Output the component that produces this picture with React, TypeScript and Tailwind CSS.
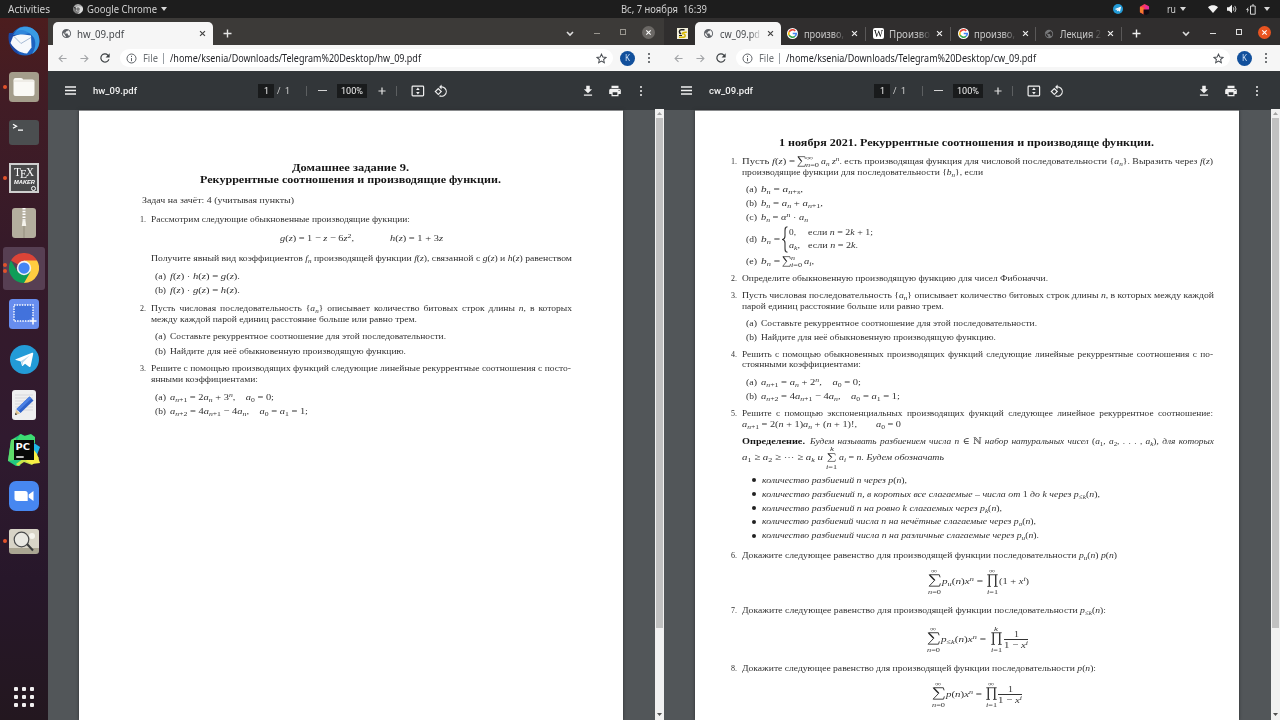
import { useLayoutEffect, useRef, type ReactNode } from 'react';

/* Stretches a single line of text to the width of its box. */
function Fit({ className = '', children }: { className?: string; children: ReactNode }) {
  const box = useRef<HTMLDivElement>(null);
  const line = useRef<HTMLSpanElement>(null);
  useLayoutEffect(() => {
    const b = box.current;
    const l = line.current;
    if (!b || !l) return;
    l.style.transform = 'none';
    const natural = l.getBoundingClientRect().width;
    const target = b.getBoundingClientRect().width;
    if (natural > 0) l.style.transform = `scaleX(${target / natural})`;
  });
  return (
    <div ref={box} className={`shrink-0 ${className}`}>
      <span ref={line} className="inline-block origin-left whitespace-nowrap">
        {children}
      </span>
    </div>
  );
}

/* Tiny math markup: $...$ is math, _{..} and ^{..} are scripts. */
function math(src: string, key: string): ReactNode[] {
  const out: ReactNode[] = [];
  const parts = src.match(/_\{[^}]*\}|\^\{[^}]*\}|[a-zA-Zα]+|[^a-zA-Zα_^]+/g) || [];
  parts.forEach((p, i) => {
    const k = key + i;
    if (p.startsWith('_{'))
      out.push(
        <span key={k} className="align-[-1.5px] text-[6.8px] leading-[0]">
          {math(p.slice(2, -1), k + 's')}
        </span>,
      );
    else if (p.startsWith('^{'))
      out.push(
        <span key={k} className="align-[3.5px] text-[6.8px] leading-[0]">
          {math(p.slice(2, -1), k + 's')}
        </span>,
      );
    else if (/^[a-zA-Zα]/.test(p)) out.push(<i key={k}>{p}</i>);
    else out.push(<span key={k} className="not-italic">{p}</span>);
  });
  return out;
}

function T({ s }: { s: string }) {
  return <>{s.split('$').map((p, i) => (i % 2 ? <span key={i}>{math(p, 'm' + i)}</span> : <span key={i}>{p}</span>))}</>;
}

function Row({ className = '', children }: { className?: string; children: ReactNode }) {
  return <div className={`flex h-[11px] leading-[11px] ${className}`}>{children}</div>;
}

function Item({ at, n, w, s }: { at: string; n: string; w: string; s: string }) {
  return (
    <Row className={at}>
      <Fit className="w-[6px]">{n}</Fit>
      <Fit className={`ml-[5px] ${w}`}><T s={s} /></Fit>
    </Row>
  );
}

function Sub({ at, n, w, s }: { at: string; n: string; w: string; s: string }) {
  return (
    <Row className={at}>
      <Fit className="w-[11px]">{n}</Fit>
      <Fit className={`ml-[4px] ${w}`}><T s={s} /></Fit>
    </Row>
  );
}

function Bullet({ at, w, s }: { at: string; w: string; s: string }) {
  return (
    <Row className={`items-center italic ${at}`}>
      <span className="size-[4px] shrink-0 rounded-full bg-[#222]" />
      <Fit className={`ml-[6px] ${w}`}><T s={s} /></Fit>
    </Row>
  );
}

function SumSign({ className }: { className: string }) {
  return (
    <svg viewBox="0 0 14 14" className={className} preserveAspectRatio="none" fill="none" stroke="#333">
      <path d="M13 3.6 12.2.8H1.4L7.2 6.8 1.2 13.1h11.2l.9-3" strokeWidth="1" />
      <path d="m1.8 1 5.4 5.8" strokeWidth="1.6" />
    </svg>
  );
}

function ProdSign({ className }: { className: string }) {
  return (
    <svg viewBox="0 0 12 14" className={className} preserveAspectRatio="none" fill="none" stroke="#333">
      <path d="M.3.8h11.4M.3 13.4h4M7.7 13.4h4" strokeWidth=".9" />
      <path d="M2.5.8v12.4M9.5.8v12.4" strokeWidth="1.5" />
    </svg>
  );
}

function Big({ kind, top, bottom }: { kind: 'sum' | 'prod'; top: string; bottom: string }) {
  return (
    <div className="flex w-[14px] shrink-0 flex-col items-center text-[6.5px] leading-[7px]">
      <Fit className={`h-[7px] ${top === '∞' ? 'w-[6px]' : 'w-[4px]'}`}>{math(top, 't')}</Fit>
      {kind === 'sum' ? <SumSign className="h-[13px] w-[13px]" /> : <ProdSign className="h-[13px] w-[11px]" />}
      <Fit className={`mt-px h-[7px] ${kind === 'sum' ? 'w-[13px]' : 'w-[11px]'}`}>{math(bottom, 'b')}</Fit>
    </div>
  );
}

function Fraction() {
  return (
    <div className="flex w-[24px] shrink-0 flex-col items-center">
      <Fit className="h-[10px] w-[5px] leading-[10px]">1</Fit>
      <span className="h-px w-full bg-[#333]" />
      <Fit className="h-[10px] w-[24px] leading-[11px]"><T s="$1 − x^{i}$" /></Fit>
    </div>
  );
}

function LeftDoc() {
  return (
    <>
      <Row className="pl-[213px] text-[10.5px] font-bold text-[#151515]">
        <Fit className="w-[117px]">Домашнее задание 9.</Fit>
      </Row>
      <Row className="mt-px pl-[121px] text-[10.5px] font-bold text-[#151515]">
        <Fit className="w-[301px]">Рекуррентные соотношения и производящие функции.</Fit>
      </Row>
      <Row className="mt-[9.5px] pl-[63px]">
        <Fit className="w-[152px]">Задач на зачёт: 4 (учитывая пункты)</Fit>
      </Row>
      <Item at="mt-[8px] pl-[61px]" n="1." w="w-[259px]" s="Рассмотрим следующие обыкновенные производящие фукнции:" />
      <Row className="mt-[8.5px] pl-[201px]">
        <Fit className="w-[74px]"><T s="$g(z) = 1 − z − 6z^{2},$" /></Fit>
        <Fit className="ml-[36px] w-[53px]"><T s="$h(z) = 1 + 3z$" /></Fit>
      </Row>
      <Row className="mt-[8.5px] pl-[72px]">
        <Fit className="w-[421px]"><T s="Получите явный вид коэффициентов $f_{n}$ производящей функции $f(z)$, связанной с $g(z)$ и $h(z)$ равенством" /></Fit>
      </Row>
      <Sub at="mt-[7px] pl-[76px]" n="(a)" w="w-[70px]" s="$f(z) · h(z) = g(z).$" />
      <Sub at="mt-[3px] pl-[76px]" n="(b)" w="w-[70px]" s="$f(z) · g(z) = h(z).$" />
      <Item at="mt-[7px] pl-[61px] [word-spacing:1.5px]" n="2." w="w-[421px]" s="Пусть числовая последовательность ${a_{n}}$ описывает количество битовых строк длины $n$, в которых" />
      <Row className="pl-[72px]"><Fit className="w-[266px]">между каждой парой единиц расстояние больше или равно трем.</Fit></Row>
      <Sub at="mt-[6px] pl-[76px]" n="(a)" w="w-[276px]" s="Составьте рекуррентное соотношение для этой последовательности." />
      <Sub at="mt-[4px] pl-[76px]" n="(b)" w="w-[236px]" s="Найдите для неё обыкновенную производящую функцию." />
      <Item at="mt-[6px] pl-[61px]" n="3." w="w-[420px]" s="Решите с помощью производящих функций следующие линейные рекуррентные соотношения с посто-" />
      <Row className="pl-[72px]"><Fit className="w-[107px]">янными коэффициентами:</Fit></Row>
      <Sub at="mt-[7px] pl-[76px]" n="(a)" w="w-[104px]" s={'$a_{n+1} = 2a_{n} + 3^{n},\u2003a_{0} = 0;$'} />
      <Sub at="mt-[3px] pl-[76px]" n="(b)" w="w-[138px]" s={'$a_{n+2} = 4a_{n+1} − 4a_{n},\u2003a_{0} = a_{1} = 1;$'} />
    </>
  );
}

function RightDoc() {
  return (
    <>
      <Row className="pl-[84px] text-[10.5px] font-bold text-[#151515]">
        <Fit className="w-[375px]">1 ноября 2021. Рекуррентные соотношения и производяще функции.</Fit>
      </Row>
      <Row className="mt-[8.5px] pl-[36px]">
        <Fit className="w-[6px]">1.</Fit>
        <Fit className="ml-[5px] w-[53px]"><T s="Пусть $f(z) =$" /></Fit>
        <SumSign className="ml-[2px] h-[11px] w-[9px] shrink-0" />
        <div className="-mt-[2px] flex w-[14px] shrink-0 flex-col text-[6.5px] leading-[7px]">
          <Fit className="w-[7px]">∞</Fit>
          <Fit className="w-[13px]"><T s="$n=0$" /></Fit>
        </div>
        <Fit className="ml-px w-[392px]"><T s="$a_{n} z^{n}$. есть производящая функция для числовой последовательности ${a_{n}}$. Выразить через $f(z)$" /></Fit>
      </Row>
      <Row className="-mt-[0.5px] pl-[47px]">
        <Fit className="w-[241px]"><T s="производящие функции для последовательности ${b_{n}}$, если" /></Fit>
      </Row>
      <Sub at="mt-[6.5px] pl-[51px]" n="(a)" w="w-[42px]" s="$b_{n} = a_{n+s},$" />
      <Sub at="mt-[2.5px] pl-[51px]" n="(b)" w="w-[62px]" s="$b_{n} = a_{n} + a_{n+1},$" />
      <Sub at="mt-[3px] pl-[51px]" n="(c)" w="w-[47px]" s="$b_{n} = α^{n} · a_{n}$" />
      <div className="mt-[3px] flex h-[27px] items-center pl-[51px] leading-[11px]">
        <Fit className="w-[11px]">(d)</Fit>
        <Fit className="ml-[4px] w-[19px]"><T s="$b_{n} =$" /></Fit>
        <svg viewBox="0 0 6 27" className="ml-[2px] h-[27px] w-[6px] shrink-0" fill="none" stroke="#333" strokeWidth="1.1">
          <path d="M5.5.7C3 1 3 2.5 3 5v5c0 2-.6 3-2.4 3.500C2.400 14 3 15 3 17v5c0 2.500 0 4 2.500 4.300" />
        </svg>
        <div className="flex flex-col gap-[2.5px]">
          <div className="flex">
            <Fit className="ml-px w-[7px]">0,</Fit>
            <Fit className="ml-[12px] w-[65px]"><T s="если $n = 2k + 1;$" /></Fit>
          </div>
          <div className="flex">
            <Fit className="ml-px w-[11px]"><T s="$a_{k},$" /></Fit>
            <Fit className="ml-[8px] w-[50px]"><T s="если $n = 2k.$" /></Fit>
          </div>
        </div>
      </div>
      <Row className="mt-[3px] pl-[51px]">
        <Fit className="w-[11px]">(e)</Fit>
        <Fit className="ml-[4px] w-[19px]"><T s="$b_{n} =$" /></Fit>
        <SumSign className="ml-[2px] h-[11px] w-[9px] shrink-0" />
        <div className="-mt-[2px] flex w-[12px] shrink-0 flex-col text-[6.5px] leading-[7px]">
          <Fit className="w-[4px] italic">n</Fit>
          <Fit className="w-[11px]"><T s="$i=0$" /></Fit>
        </div>
        <Fit className="ml-px w-[10px]"><T s="$a_{i},$" /></Fit>
      </Row>
      <Item at="mt-[6px] pl-[36px]" n="2." w="w-[306px]" s="Определите обыкновенную производящую функцию для чисел Фибоначчи." />
      <Item at="mt-[6.5px] pl-[36px]" n="3." w="w-[472px]" s="Пусть числовая последовательность ${a_{n}}$ описывает количество битовых строк длины $n$, в которых между каждой" />
      <Row className="-mt-[0.5px] pl-[47px]"><Fit className="w-[202px]">парой единиц расстояние больше или равно трем.</Fit></Row>
      <Sub at="mt-[6.5px] pl-[51px]" n="(a)" w="w-[276px]" s="Составьте рекуррентное соотношение для этой последовательности." />
      <Sub at="mt-[2.5px] pl-[51px]" n="(b)" w="w-[235px]" s="Найдите для неё обыкновенную производящую функцию." />
      <Item at="mt-[6px] pl-[36px] [word-spacing:1px]" n="4." w="w-[471px]" s="Решить с помощью обыкновенных производящих функций следующие линейные рекуррентные соотношения с по-" />
      <Row className="-mt-[0.5px] pl-[47px]"><Fit className="w-[119px]">стоянными коэффициентами:</Fit></Row>
      <Sub at="mt-[6.5px] pl-[51px]" n="(a)" w="w-[100px]" s={'$a_{n+1} = a_{n} + 2^{n},\u2003a_{0} = 0;$'} />
      <Sub at="mt-[3px] pl-[51px]" n="(b)" w="w-[139px]" s={'$a_{n+2} = 4a_{n+1} − 4a_{n},\u2003a_{0} = a_{1} = 1;$'} />
      <Item at="mt-[6px] pl-[36px] [word-spacing:2px]" n="5." w="w-[471px]" s="Решите с помощью экспоненциальных производящих функций следующее линейное рекуррентное соотношение:" />
      <Row className="pl-[47px]">
        <Fit className="w-[115px]"><T s="$a_{n+1} = 2(n + 1)a_{n} + (n + 1)!,$" /></Fit>
        <Fit className="ml-[19px] w-[25px]"><T s="$a_{0} = 0$" /></Fit>
      </Row>
      <Row className="mt-[6px] pl-[47px] [word-spacing:1px]">
        <Fit className="w-[63px] font-bold text-[#151515]">Определение.</Fit>
        <Fit className="ml-[5px] w-[404px] italic"><T s="Будем называть разбиением числа $n ∈ ℕ$ набор натуральных чисел $(a_{1}, a_{2}, . . . , a_{k})$, для которых" /></Fit>
      </Row>
      <Row className="mt-[5.5px] items-center pl-[47px]">
        <Fit className="w-[81px] italic"><T s="$a_{1} ≥ a_{2} ≥ ··· ≥ a_{k}$  и" /></Fit>
        <div className="ml-[2px] flex w-[13px] shrink-0 flex-col items-center text-[6.5px] leading-[7px]">
          <Fit className="w-[4px] italic">k</Fit>
          <SumSign className="mt-px h-[9px] w-[9px]" />
          <Fit className="mt-px w-[11px]"><T s="$i=1$" /></Fit>
        </div>
        <Fit className="ml-px w-[105px] italic"><T s="$a_{i} = n$. Будем обозначать" /></Fit>
      </Row>
      <Bullet at="mt-[11.5px] pl-[57px]" w="w-[145px]" s="количество разбиений $n$ через $p(n),$" />
      <Bullet at="mt-[3px] pl-[57px]" w="w-[338px]" s="количество разбиений $n$, в коротых все слагаемые – числа от $1$ до $k$ через $p_{≤k}(n),$" />
      <Bullet at="mt-[3px] pl-[57px]" w="w-[240px]" s="количество разбиений $n$ на ровно $k$ слагаемых через $p_{k}(n),$" />
      <Bullet at="mt-[2.5px] pl-[57px]" w="w-[274px]" s="количество разбиений числа $n$ на нечётные слагаемые через $p_{o}(n),$" />
      <Bullet at="mt-[3px] pl-[57px]" w="w-[277px]" s="количество разбиений числа $n$ на различные слагаемые через $p_{u}(n).$" />
      <Item at="mt-[8.5px] pl-[36px]" n="6." w="w-[375px]" s="Докажите следующее равенство для производящей функции последовательности $p_{u}(n) p(n)$" />
      <div className="mt-[5.5px] flex h-[30px] items-center pl-[232px] leading-[11px]">
        <Big kind="sum" top="∞" bottom="n=0" />
        <Fit className="ml-px w-[41px]"><T s="$p_{u}(n)x^{n} =$" /></Fit>
        <div className="w-[2px]" />
        <Big kind="prod" top="∞" bottom="i=1" />
        <Fit className="w-[30px]"><T s="$(1 + x^{i})$" /></Fit>
      </div>
      <Item at="mt-[9px] pl-[36px]" n="7." w="w-[364px]" s="Докажите следующее равенство для производящей функции последовательности $p_{≤k}(n)$:" />
      <div className="mt-[8px] flex h-[30px] items-center pl-[231px] leading-[11px]">
        <Big kind="sum" top="∞" bottom="n=0" />
        <Fit className="ml-px w-[45px]"><T s="$p_{≤k}(n)x^{n} =$" /></Fit>
        <div className="w-[3px]" />
        <Big kind="prod" top="k" bottom="i=1" />
        <div className="w-px" />
        <Fraction />
      </div>
      <Item at="mt-[8.5px] pl-[36px]" n="8." w="w-[354px]" s="Докажите следующее равенство для производящей функции последовательности $p(n)$:" />
      <div className="mt-[5.5px] flex h-[30px] items-center pl-[236px] leading-[11px]">
        <Big kind="sum" top="∞" bottom="n=0" />
        <Fit className="ml-px w-[36px]"><T s="$p(n)x^{n} =$" /></Fit>
        <div className="w-[2px]" />
        <Big kind="prod" top="∞" bottom="i=1" />
        <Fraction />
      </div>
      <Item at="mt-[9px] pl-[36px]" n="9." w="w-[354px]" s="Докажите следующее равенство для производящей функции последовательности $p(n)$:" />
    </>
  );
}

function Globe({ className }: { className: string }) {
  return (
    <svg viewBox="0 0 24 24" className={className} fill="currentColor">
      <path d="M12 2a10 10 0 1 0 0 20 10 10 0 0 0 0-20Zm-1 17.900A8 8 0 0 1 4.200 10.200L9 15v1a2 2 0 0 0 2 2v1.900Zm6.900-2.500A2 2 0 0 0 16 16h-1v-3a1 1 0 0 0-1-1H8v-2h2a1 1 0 0 0 1-1V7h2a2 2 0 0 0 2-2v-.400a8 8 0 0 1 2.900 12.800Z" />
    </svg>
  );
}

function Close({ className }: { className: string }) {
  return (
    <svg viewBox="0 0 10 10" className={`size-[7px] shrink-0 ${className}`} fill="none" stroke="currentColor" strokeWidth="1.7">
      <path d="m1.500 1.500 7 7m0-7-7 7" />
    </svg>
  );
}

function Plus({ className }: { className: string }) {
  return (
    <svg viewBox="0 0 9 9" className={`size-[9px] shrink-0 ${className}`} fill="none" stroke="currentColor" strokeWidth="1.4">
      <path d="M4.500.5v8M.5 4.500h8" />
    </svg>
  );
}

function GoogleIcon() {
  return (
    <svg viewBox="0 0 48 48" className="size-[11px] shrink-0">
      <circle cx="24" cy="24" r="24" fill="#fff" />
      <g fill="none" strokeWidth="7">
        <path d="M36 13A16.500 16.500 0 0 0 9.500 16.500" stroke="#ea4335" />
        <path d="M9.500 16.500a16.500 16.500 0 0 0 0 15" stroke="#fbbc05" />
        <path d="M9.500 31.500A16.500 16.500 0 0 0 35 36" stroke="#34a853" />
        <path d="M35 36a16 16 0 0 0 5.500-12H25" stroke="#4285f4" />
      </g>
    </svg>
  );
}

function Controls({ active }: { active: boolean }) {
  return (
    <div className="ml-auto flex items-center pr-[9px]">
      <svg viewBox="0 0 8 6" className="mt-[4px] h-[6px] w-[8px]" fill="none" stroke="#ddd" strokeWidth="1.6"><path d="m1 1 3 3 3-3" /></svg>
      <span className={`ml-[20px] mt-[3px] h-px w-[6px] ${active ? 'bg-[#ddd]' : 'bg-[#99968f]'}`} />
      <span className={`ml-[20px] mt-px size-[6px] border ${active ? 'border-[#ddd]' : 'border-[#99968f]'}`} />
      <span className={`ml-[16px] mt-px flex size-[13px] items-center justify-center rounded-full text-white ${active ? 'bg-[#e95420]' : 'bg-[#6b6865]'}`}>
        <Close className="scale-90" />
      </span>
    </div>
  );
}

/* Tab caption that runs out under a fade at its right edge. */
function Caption({ className, w, children }: { className: string; w: string; children: string }) {
  return (
    <div className={`shrink-0 [mask-image:linear-gradient(to_right,black_70%,transparent)] ${className}`}>
      <Fit className={w}>{children}</Fit>
    </div>
  );
}

function Tabs({ right }: { right: boolean }) {
  if (!right)
    return (
      <div className="flex h-[27px] bg-[#3c3a38]">
        <div className="ml-[5px] mt-[4px] flex h-[23px] w-[160px] items-center rounded-t-[5px] bg-[#f6f6f6]">
          <Globe className="ml-[8px] size-[11px] text-[#5f6368]" />
          <Fit className="ml-[5px] w-[47px] text-[10.5px] leading-[14px] text-[#45484c]">hw_09.pdf</Fit>
          <Close className="ml-auto mr-[7px] text-[#444]" />
        </div>
        <Plus className="ml-[10px] mt-[11px] text-[#e5e5e5]" />
        <Controls active={false} />
      </div>
    );
  return (
    <div className="flex h-[27px] bg-[#302e2e]">
      <div className="ml-[13px] mt-[10px] flex size-[11px] items-center justify-center bg-[#f3f0dc]">
        <svg viewBox="0 0 11 11" className="size-[11px]" fill="none" strokeWidth="1.5">
          <path d="M7.500 1.800H4.200C1.800 2 1.800 5.500 4.200 5.700" stroke="#222" />
          <path d="M9.800 4.200C6 4 4 5.200 6.500 6.300" stroke="#d8b900" />
          <path d="M2 9.300h4.500C8.800 9 8.600 7 7 6" stroke="#d8b900" />
          <path d="M2 7.500h3" stroke="#222" strokeWidth="1" />
        </svg>
      </div>
      <div className="ml-[7px] mt-[4px] flex h-[23px] w-[86px] items-center rounded-t-[5px] bg-[#f6f6f6]">
        <Globe className="ml-[8px] size-[11px] shrink-0 text-[#5f6368]" />
        <Caption className="ml-[6px] w-[42px] text-[10.5px] leading-[14px] text-[#45484c]" w="w-[40px]">cw_09.pd</Caption>
        <Close className="ml-[5px] text-[#444]" />
      </div>
      <div className="flex h-[31px] items-center text-[10.5px] leading-[14px] text-[#c9c9c9]">
        <div className="ml-[6px] flex items-center">
          <GoogleIcon />
          <Caption className="ml-[6px] w-[42px]" w="w-[40px]">произво,</Caption>
          <Close className="ml-[5px] text-[#eee]" />
        </div>
        <span className="ml-[7px] h-[14px] w-px bg-[#5a5858]" />
        <div className="ml-[7px] flex items-center">
          <span className="flex size-[11px] shrink-0 items-center justify-center rounded-[2px] bg-white font-['Liberation_Serif',serif] text-[10px] leading-none text-black">
            <Fit className="w-[9px]">W</Fit>
          </span>
          <Caption className="ml-[5px] w-[42px]" w="w-[41px]">Произво</Caption>
          <Close className="ml-[5px] text-[#eee]" />
        </div>
        <span className="ml-[7px] h-[14px] w-px bg-[#5a5858]" />
        <div className="ml-[7px] flex items-center">
          <GoogleIcon />
          <Caption className="ml-[5px] w-[43px]" w="w-[41px]">произво,</Caption>
          <Close className="ml-[5px] text-[#eee]" />
        </div>
        <span className="ml-[6px] h-[14px] w-px bg-[#5a5858]" />
        <div className="ml-[8px] flex items-center">
          <Globe className="size-[10px] shrink-0 text-[#77787a]" />
          <Caption className="ml-[6px] w-[42px]" w="w-[41px]">Лекция 2</Caption>
          <Close className="ml-[5px] text-[#eee]" />
        </div>
        <span className="ml-[7px] h-[14px] w-px bg-[#5a5858]" />
        <Plus className="ml-[10px] text-[#eee]" />
      </div>
      <Controls active />
    </div>
  );
}

function Dots({ className }: { className: string }) {
  return (
    <span className={`flex flex-col gap-[2px] ${className}`}>
      <span className="size-[2px] rounded-full bg-current" />
      <span className="size-[2px] rounded-full bg-current" />
      <span className="size-[2px] rounded-full bg-current" />
    </span>
  );
}

function AddressBar({ right, url }: { right: boolean; url: string }) {
  return (
    <div className="flex h-[26px] items-center bg-[#f6f6f6] text-[10.5px] leading-[14px]">
      <svg viewBox="0 0 10 9" className="ml-[10px] h-[9px] w-[9px] shrink-0" fill="none" stroke="#a3a5a8" strokeWidth="1.2"><path d="M9.500 4.500H1M5 .7 1.200 4.500 5 8.300" /></svg>
      <svg viewBox="0 0 10 9" className="ml-[13px] h-[9px] w-[9px] shrink-0" fill="none" stroke="#a3a5a8" strokeWidth="1.2"><path d="M.5 4.500H9M5 .7l3.800 3.800L5 8.300" /></svg>
      <svg viewBox="0 0 24 24" className="ml-[9px] size-[14px] shrink-0" fill="#3c4043"><path d="M17.650 6.350A8 8 0 1 0 19.730 14h-2.080A6 6 0 1 1 12 6c1.660 0 3.140.690 4.220 1.780L13 11h7V4l-2.350 2.350z" /></svg>
      <div className={`ml-[8px] flex h-[18px] items-center rounded-full bg-white ${right ? 'w-[494px]' : 'w-[493px]'}`}>
        <svg viewBox="0 0 11 11" className="ml-[6px] size-[11px] shrink-0" fill="none" stroke="#5f6368" strokeWidth="1"><circle cx="5.500" cy="5.500" r="4.500" /><path d="M5.500 5v3.200M5.500 2.800v1.200" /></svg>
        <Fit className="ml-[6px] w-[15px] text-[#6d7175]">File</Fit>
        <span className="ml-[5px] h-[11px] w-px bg-[#9aa0a6]" />
        <Fit className={`ml-[6px] text-[#232428] ${right ? 'w-[250px]' : 'w-[251px]'}`}>{url}</Fit>
        <svg viewBox="0 0 24 24" className="ml-auto mr-[6px] size-[11px]" fill="none" stroke="#4b4f54" strokeWidth="2.2"><path d="m12 2.500 2.900 6.400 7 .7-5.300 4.600 1.600 6.900L12 17.500l-6.200 3.600 1.600-6.900L2.100 9.600l7-.7z" /></svg>
      </div>
      <span className="ml-[7px] flex size-[15px] items-center justify-center rounded-full bg-[#12509c] text-[8px] leading-none text-[#cfe0f5]">
        <Fit className="w-[5px]">K</Fit>
      </span>
      <Dots className="ml-[13px] text-[#45484c]" />
    </div>
  );
}

function PdfBar({ name }: { name: string }) {
  return (
    <div className="flex h-[39px] items-center bg-[#323639] font-['Roboto',sans-serif] text-[9.5px] leading-[12px] text-[#f1f1f1]">
      <svg viewBox="0 0 11 9" className="ml-[17px] h-[9px] w-[11px] shrink-0" stroke="#f1f1f1" strokeWidth="1.5"><path d="M0 1h11M0 4.500h11M0 8h11" /></svg>
      <Fit className="ml-[17px] w-[44px] font-medium">{name}</Fit>
      <div className="ml-[121px] flex h-[14px] w-[16px] items-center justify-center bg-[#191b1c]"><Fit className="w-[5px]">1</Fit></div>
      <Fit className="ml-[3px] w-[13px] text-[#d5d5d5]">/&nbsp; 1</Fit>
      <span className="ml-[16px] h-[10px] w-px bg-[#5c5f61]" />
      <span className="ml-[11px] h-px w-[9px] bg-[#d5d5d5]" />
      <div className="ml-[10px] flex h-[14px] w-[30px] items-center justify-center bg-[#191b1c]"><Fit className="w-[22px]">100%</Fit></div>
      <Plus className="ml-[11px] !size-[8px] text-[#dedede]" />
      <span className="ml-[10px] h-[10px] w-px bg-[#5c5f61]" />
      <svg viewBox="0 0 14 12" className="ml-[14px] h-[12px] w-[14px] shrink-0" fill="none" stroke="#f1f1f1" strokeWidth="1.2">
        <rect x="1.100" y="1.100" width="11.500" height="9.800" rx=".8" />
        <path d="M6.900 2.500 5.100 4.900h3.600zM6.900 9.500 5.100 7.100h3.600z" fill="#f1f1f1" stroke="none" />
      </svg>
      <svg viewBox="0 0 24 24" className="ml-[9px] size-[14px] shrink-0" fill="#f1f1f1">
        <path d="M7.340 6.410.860 12.900l6.490 6.480 6.490-6.480-6.500-6.490zM3.690 12.900l3.660-3.660L11 12.900l-3.660 3.660-3.650-3.660zm15.670-6.260A8.950 8.950 0 0 0 13 4V.760L8.760 5 13 9.240V6c1.790 0 3.580.680 4.950 2.050a7.007 7.007 0 0 1 0 9.900 6.973 6.973 0 0 1-7.790 1.440l-1.490 1.490C10.020 21.620 11.510 22 13 22c2.300 0 4.610-.880 6.360-2.640a8.980 8.980 0 0 0 0-12.720z" />
      </svg>
      <svg viewBox="0 0 24 24" className="ml-[133px] size-[14px] shrink-0" fill="#f1f1f1"><path d="M19 9h-4V3H9v6H5l7 7zM5 18v2h14v-2z" /></svg>
      <svg viewBox="0 0 24 24" className="ml-[13px] size-[14px] shrink-0" fill="#f1f1f1"><path d="M19 8H5c-1.660 0-3 1.340-3 3v6h4v4h12v-4h4v-6c0-1.660-1.340-3-3-3zm-3 11H8v-5h8v5zm3-7a1 1 0 1 1 0-2 1 1 0 0 1 0 2zm-1-9H6v4h12z" /></svg>
      <Dots className="ml-[18px]" />
    </div>
  );
}

function Window({ right }: { right: boolean }) {
  return (
    <div className="flex h-full w-[616px] shrink-0 flex-col bg-[#525659] font-['Noto_Sans',sans-serif]">
      <Tabs right={right} />
      <AddressBar right={right} url={right ? '/home/ksenia/Downloads/Telegram%20Desktop/cw_09.pdf' : '/home/ksenia/Downloads/Telegram%20Desktop/hw_09.pdf'} />
      <PdfBar name={right ? 'cw_09.pdf' : 'hw_09.pdf'} />
      <div className="flex min-h-0 flex-1 justify-between pl-[31px]">
        <div className={`h-full w-[544px] overflow-hidden border-t border-[#8a8c8e] bg-white font-['Liberation_Serif','DejaVu_Serif',serif] text-[9.2px] text-[#303030] shadow-[0_0_3px_#2d2f31] ${right ? 'pt-[25.5px]' : 'pt-[51px]'}`}>
          {right ? <RightDoc /> : <LeftDoc />}
        </div>
        <div className="-mt-px flex w-[9px] flex-col items-center bg-[#f1f1f1]">
          <svg viewBox="0 0 9 9" className="size-[9px] shrink-0" fill="#a3a3a3"><path d="m2 6 2.500-3L7 6z" /></svg>
          <span className="h-[510px] w-[7px] shrink-0 bg-[#c1c1c1]" />
          <svg viewBox="0 0 9 9" className="mb-px mt-auto size-[9px] shrink-0" fill="#505050"><path d="m2 3 2.500 3L7 3z" /></svg>
        </div>
      </div>
    </div>
  );
}

function ChromeLogo({ className, grey = false }: { className: string; grey?: boolean }) {
  return (
    <svg viewBox="0 0 48 48" className={className}>
      <path d="M24 24 3.200 12A24 24 0 0 1 44.800 12z" fill={grey ? '#a7a7a7' : '#db4437'} />
      <path d="M24 24V12h20.800A24 24 0 0 1 24 48z" fill={grey ? '#dcdcdc' : '#ffcd40'} />
      <path d="M3.200 12A24 24 0 0 0 24 48l10.400-18L24 24l-10.400 6z" fill={grey ? '#7c7c7c' : '#0f9d58'} />
      <circle cx="24" cy="24" r="11.500" fill={grey ? '#e5e5e5' : '#f4f4f4'} />
      <circle cx="24" cy="24" r="9" fill={grey ? '#777' : '#4285f4'} />
    </svg>
  );
}

function TelegramLogo({ className }: { className: string }) {
  return (
    <svg viewBox="0 0 28 28" className={className}>
      <circle cx="14" cy="14" r="14" fill="#239bd7" />
      <path d="M5.500 13.800 21.300 7.600c.8-.3 1.300.2 1.100 1.100l-2.500 11.700c-.2.8-.8 1-1.500.6l-3.900-2.900-2 1.900c-.6.500-1 .2-1.100-.4l-1-3.700-4.700-1.300c-.8-.3-.8-.6-.2-.8z" fill="#fff" />
      <path d="m10.500 15.800 8.500-5.600-6.500 6.700-.4 3z" fill="#b9d9ec" />
    </svg>
  );
}

function Caret({ className }: { className: string }) {
  return <svg viewBox="0 0 6 4" className={`h-[4px] w-[6px] shrink-0 ${className}`} fill="#d8d8d8"><path d="M0 0h6L3 4z" /></svg>;
}

function TopBar() {
  return (
    <div className="flex h-[18px] shrink-0 items-center bg-[#1d1d1d] font-['Noto_Sans',sans-serif] text-[10px] leading-[18px] text-[#d0d0d0]">
      <Fit className="ml-[8px] w-[42px]">Activities</Fit>
      <ChromeLogo grey className="ml-[23px] size-[10px]" />
      <Fit className="ml-[4px] w-[70px]">Google Chrome</Fit>
      <Caret className="ml-[4px]" />
      <Fit className="ml-[454px] w-[86px]">Вс, 7 ноября&nbsp; 16:39</Fit>
      <TelegramLogo className="ml-[406px] size-[10px]" />
      <svg viewBox="0 0 12 12" className="ml-[16px] size-[11px]">
        <path d="m1 3 5-3 5 2.500-4 6-2 3-4-2.500z" fill="#fa3a5c" />
        <path d="m1 3 4 1v7L1 9z" fill="#f57b2c" />
        <path d="m6 1 5 2v3L8 8z" fill="#e62ba0" />
        <path d="M5 6h6v4l-3 2-3-1z" fill="#120a14" />
      </svg>
      <Fit className="ml-[17px] w-[9px]">ru</Fit>
      <Caret className="ml-[4px]" />
      <svg viewBox="0 0 10 8" className="ml-[22px] h-[8px] w-[10px]" fill="#f0f0f0"><path d="M0 2.200C3-.4 7-.4 10 2.200L5 8z" /></svg>
      <svg viewBox="0 0 10 10" className="ml-[9px] size-[10px]" fill="#f0f0f0">
        <path d="M0 3.300h2L5 .8v8.400l-3-2.500H0z" />
        <path d="M6.300 3.300q1.200 1.700 0 3.400M7.800 1.900q2.400 3.100 0 6.200" fill="none" stroke="#c8c8c8" strokeWidth="1" />
      </svg>
      <svg viewBox="0 0 10 11" className="ml-[9px] h-[11px] w-[10px]" fill="none" stroke="#d5d5d5" strokeWidth="1"><path d="M4.500 2h4.700v8.200H4.500zM6 1h2" /><path d="M2.500 3 0 6h1.500L1 9l2-3.500H1.800z" fill="#e5e5e5" stroke="none" /></svg>
      <Caret className="ml-[8px]" />
    </div>
  );
}

function Cell({ dots = 0, active = false, children }: { dots?: number; active?: boolean; children: ReactNode }) {
  return (
    <div className="flex h-[45.45px] w-[48px] items-center">
      <div className="flex w-[9px] flex-col items-end gap-[2px] pr-[2.5px]">
        {dots > 0 && !active && <span className="size-[4px] rounded-full bg-[#e2522b]" />}
      </div>
      <div className={`-ml-[6px] flex h-[43px] w-[42px] items-center rounded-[3px] ${active ? 'bg-[#573f53]' : ''}`}>
        {active && (
          <div className="flex w-0 flex-col gap-[2px]">
            <span className="-ml-[0.5px] size-[4px] rounded-full bg-[#e2522b]" />
            <span className="-ml-[0.5px] size-[4px] rounded-full bg-[#e2522b]" />
          </div>
        )}
        <div className="flex flex-1 items-center justify-center">{children}</div>
      </div>
    </div>
  );
}

function Dock() {
  return (
    <div className="flex w-[48px] shrink-0 flex-col bg-[linear-gradient(to_bottom,#4c1d1e_0%,#411c25_12%,#361a29_32%,#301a2f_60%,#27172a_80%,#23171f_100%)] pt-[0.5px]">
      <Cell>
        <svg viewBox="0 0 32 32" className="size-[32px]">
          <circle cx="17" cy="16" r="14.500" fill="#1d62c0" />
          <path d="M7 8C11-1 25 0 30 9c3 7 1 16-6 20 4-6 4-12 2-16C22 6 14 5 7 8z" fill="#3a9be4" />
          <path d="M1 8c-2 9 2 19 11 22-4-4-5-8-4-12l4-9C8 7 4 8 1 8z" fill="#1b47a4" />
          <path d="M2.500 18 5 11.500 12 9l11 1.500.5 12-4.500 6C12 28 6.500 24.500 2.500 18z" fill="#f7f9fc" />
          <path d="m6 11.500 7 7 10-6" fill="none" stroke="#9db3cf" strokeWidth=".9" />
          <path d="M5 10c4-7 12-6 16-1.500L12 9.500z" fill="#2f86dc" />
        </svg>
      </Cell>
      <Cell dots={1}>
        <svg viewBox="0 0 30 30" className="size-[30px]"><rect width="30" height="30" rx="3.500" fill="#a49d8b" /><path d="M4.500 8q0-2 2-2H12q2 0 2 1.500h9.500q2 0 2 2V22q0 2-2 2h-17q-2 0-2-2z" fill="#faf9f5" /><path d="M4.500 9h21" stroke="#dedbcf" strokeWidth=".8" /></svg>
      </Cell>
      <Cell>
        <svg viewBox="0 0 30 25" className="h-[25px] w-[30px]"><rect width="30" height="25" rx="3" fill="#4b4e50" /><path d="m4 4.200 3.500 2-3.500 2M9 10.200h5" fill="none" stroke="#fff" strokeWidth="1.3" /></svg>
      </Cell>
      <Cell dots={1}>
        <div className="flex size-[30px] flex-col items-center border-2 border-[#cfcfcf] bg-[#4a4a4b] text-white">
          <div className="flex pt-px font-['Liberation_Serif',serif] text-[12px] leading-[12px]"><Fit className="w-[7px]">T</Fit><Fit className="-ml-px w-[7px] pt-[2px]">E</Fit><Fit className="-ml-px w-[8px]">X</Fit></div>
          <Fit className="w-[21px] font-['Liberation_Sans',sans-serif] text-[6px] font-bold italic leading-[5px]">MAKER</Fit>
          <span className="ml-[18px] mt-px size-[5px] rounded-full border-[1.5px] border-white" />
        </div>
      </Cell>
      <Cell>
        <svg viewBox="0 0 24 30" className="h-[30px] w-[24px]"><rect width="24" height="30" rx="3" fill="#b4ae9e" /><path d="M12 16v14" stroke="#948e7e" /><path d="M12 0v14" stroke="#fff" strokeWidth="3" strokeDasharray="1.5 1.3" /><path d="M10.500 13h3l.7 5h-4.400z" fill="#f5f3ec" /></svg>
      </Cell>
      <Cell dots={2} active><ChromeLogo className="size-[30px]" /></Cell>
      <Cell>
        <svg viewBox="0 0 30 30" className="size-[30px]"><rect width="30" height="30" rx="3.500" fill="#678dee" /><rect x="5" y="6" width="19" height="16" fill="#4272dc" stroke="#fff" strokeWidth="1.4" strokeDasharray="1.5 1.1" /><path d="M24 18v8M20 22h8" stroke="#678dee" strokeWidth="3.5" /><path d="M24 18.500v7M20.500 22h7" stroke="#fff" strokeWidth="1.5" /></svg>
      </Cell>
      <Cell><TelegramLogo className="size-[29px]" /></Cell>
      <Cell>
        <svg viewBox="0 0 24 30" className="h-[30px] w-[24px]"><rect width="24" height="30" rx="3" fill="#efeff0" /><path d="M3 5h18M3 8h18M3 11h18M3 14h18M3 17h18M3 20h18" stroke="#cfcfd2" strokeWidth=".7" /><path d="m4 20-1 5 5-1.500z" fill="#dfc28a" /><path d="M17.500 6.500 21.500 10.500 8.500 23 4.500 19z" fill="#2f62c9" /><path d="m17.500 6.500 2 2L6.500 21l-2-2z" fill="#4b80e4" /><path d="m3.500 22.800-.5 2.200 2.200-.6z" fill="#333" /></svg>
      </Cell>
      <Cell>
        <svg viewBox="0 0 32 32" className="size-[32px]">
          <path d="m3 6 10-6 6 3-7 29H8L0 27z" fill="#21c97f" />
          <path d="m3 6 5-2-2 22-6 1z" fill="#5fdc6a" />
          <path d="m12 0 4 2 7-2 4 3v6H8z" fill="#3ddc72" />
          <path d="m26 9 6 4-3 8-5-2z" fill="#1fb6e6" />
          <path d="m8 30 8-6 10-6 5 6-7 7-8-3-6 4z" fill="#c9e64a" />
          <path d="m26 16 3 4 3 9-8 1-6-3z" fill="#f8ef45" />
          <rect x="6" y="6" width="20" height="20" fill="#070807" />
          <text x="7.500" y="16" fill="#fff" fontSize="9" fontWeight="700" fontFamily="DejaVu Sans" textLength="14.5" lengthAdjust="spacingAndGlyphs">PC</text>
          <path d="M8.200 23h7.500" stroke="#fff" strokeWidth="1.5" />
        </svg>
      </Cell>
      <Cell>
        <svg viewBox="0 0 30 30" className="size-[30px]"><rect width="30" height="30" rx="7" fill="#4787f0" /><path d="M5.500 10H16q2.700 0 2.700 2.700V20H8.200q-2.700 0-2.700-2.700zM19.700 13.400 24.500 10v10l-4.800-3.400z" fill="#fff" /></svg>
      </Cell>
      <Cell dots={1}>
        <svg viewBox="0 0 30 25" className="h-[25px] w-[30px]"><rect width="30" height="25" rx="3" fill="#aaa592" /><path d="M0 3q0-3 3-3h24q3 0 3 3v16H0z" fill="#d8d4c7" /><circle cx="23" cy="7" r="3" fill="#f4f3ed" /><circle cx="12.500" cy="10.500" r="7.300" fill="#e9e8e2" stroke="#4a4b4c" strokeWidth="1.2" /><path d="m18 15 6 6.500" stroke="#3b3c3d" strokeWidth="2" /></svg>
      </Cell>
      <div className="mx-auto mb-[13px] mt-auto grid grid-cols-3 gap-[4px]">
        {Array.from({ length: 9 }, (_, i) => <span key={i} className="size-[4px] rounded-[1px] bg-[#f1eff0]" />)}
      </div>
    </div>
  );
}

export default function App() {
  return (
    <div className="flex h-[720px] w-[1280px] flex-col overflow-hidden bg-[#1d1d1d]">
      <TopBar />
      <div className="flex min-h-0 flex-1">
        <Dock />
        <Window right={false} />
        <Window right />
      </div>
    </div>
  );
}
